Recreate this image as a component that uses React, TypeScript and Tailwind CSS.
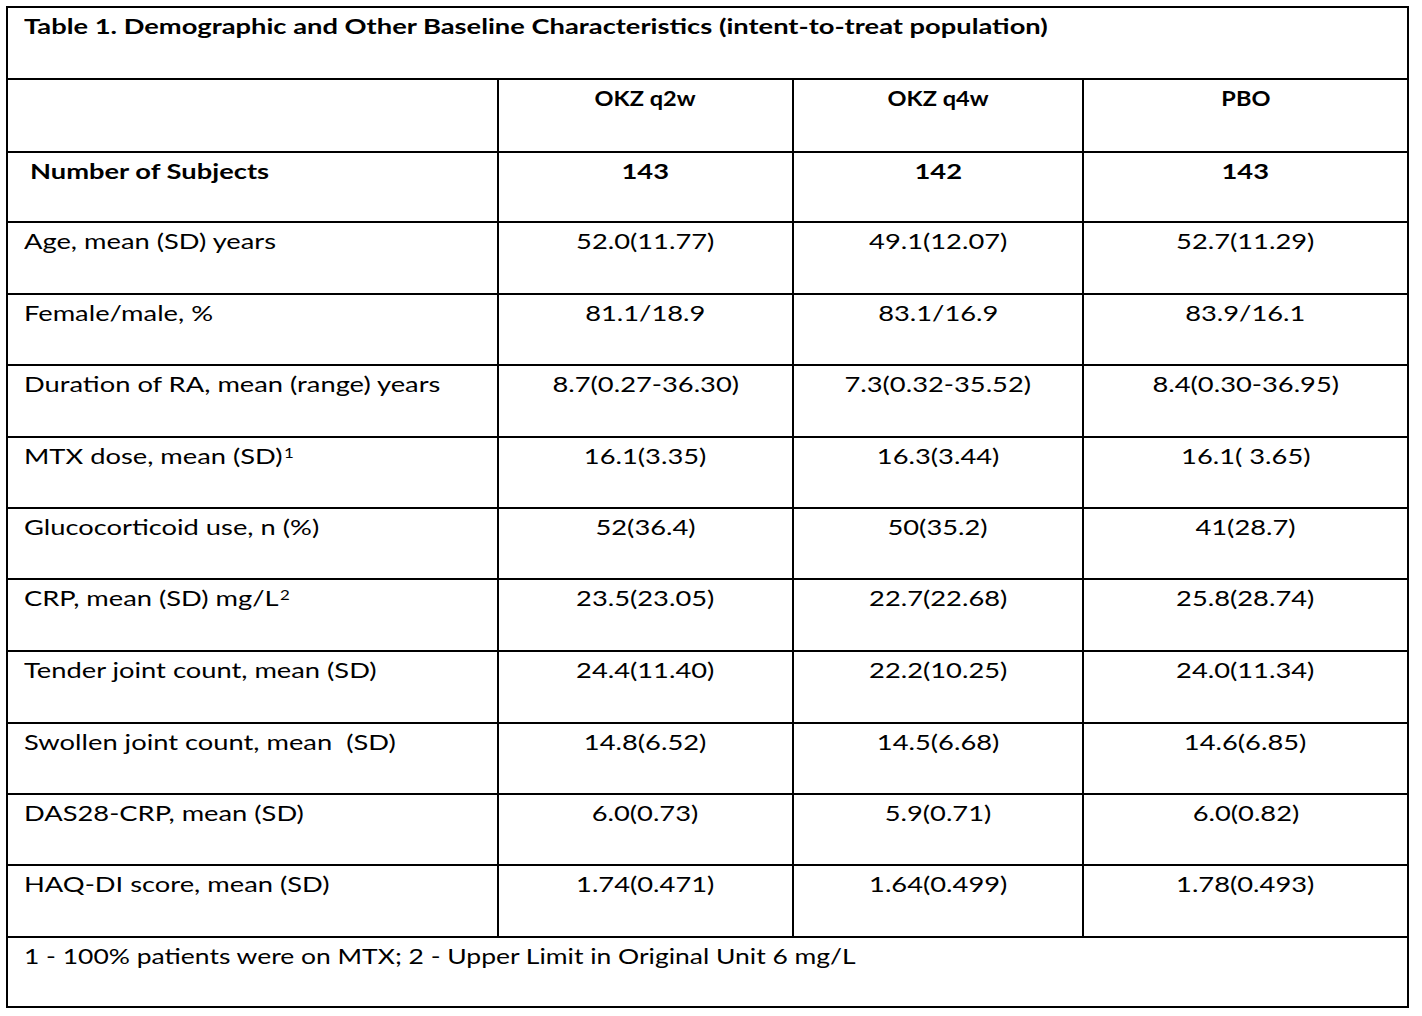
const rows: { label: React.ReactNode; values: string[]; h: string }[] = [
  { label: 'Age, mean (SD) years', values: ['52.0(11.77)', '49.1(12.07)', '52.7(11.29)'], h: 'h-[72px]' },
  { label: 'Female/male, %', values: ['81.1/18.9', '83.1/16.9', '83.9/16.1'], h: 'h-[71px]' },
  { label: 'Duration of RA, mean (range) years', values: ['8.7(0.27-36.30)', '7.3(0.32-35.52)', '8.4(0.30-36.95)'], h: 'h-[72px]' },
  {
    label: (
      <>
        MTX dose, mean (SD)<sup className="text-[13px] ml-[1px]">1</sup>
      </>
    ),
    values: ['16.1(3.35)', '16.3(3.44)', '16.1( 3.65)'],
    h: 'h-[71px]',
  },
  { label: 'Glucocorticoid use, n (%)', values: ['52(36.4)', '50(35.2)', '41(28.7)'], h: 'h-[71px]' },
  {
    label: (
      <>
        CRP, mean (SD) mg/L<sup className="text-[13px] ml-[1px]">2</sup>
      </>
    ),
    values: ['23.5(23.05)', '22.7(22.68)', '25.8(28.74)'],
    h: 'h-[72px]',
  },
  { label: 'Tender joint count, mean (SD)', values: ['24.4(11.40)', '22.2(10.25)', '24.0(11.34)'], h: 'h-[72px]' },
  { label: 'Swollen joint count, mean  (SD)', values: ['14.8(6.52)', '14.5(6.68)', '14.6(6.85)'], h: 'h-[71px]' },
  { label: 'DAS28-CRP, mean (SD)', values: ['6.0(0.73)', '5.9(0.71)', '6.0(0.82)'], h: 'h-[71px]' },
  { label: 'HAQ-DI score, mean (SD)', values: ['1.74(0.471)', '1.64(0.499)', '1.78(0.493)'], h: 'h-[72px]' },
]

const cell = 'border-2 border-black align-top px-[16px] pt-[5px] whitespace-pre'
const wideLeft = 'inline-block origin-left scale-x-[1.3]'
const wideMid = 'inline-block scale-x-[1.3]'

export default function App() {
  return (
    <div className="min-h-screen bg-white pt-[6px] pl-[6px] text-black font-['Lato','Liberation_Sans',sans-serif] text-[21px] leading-[26px]">
      <table className="border-collapse table-fixed w-[1401px]">
        <colgroup>
          <col className="w-[491px]" />
          <col className="w-[295px]" />
          <col className="w-[290px]" />
          <col className="w-[325px]" />
        </colgroup>
        <tbody>
          <tr>
            <td colSpan={4} className={`${cell} h-[72px] font-bold`}>
              <span className={wideLeft}>
                Table 1. Demographic and Other Baseline Characteristics (intent-to-treat population)
              </span>
            </td>
          </tr>
          <tr>
            <td className={`${cell} h-[73px]`}></td>
            {['OKZ q2w', 'OKZ q4w', 'PBO'].map((t) => (
              <td key={t} className={`${cell} h-[73px] text-center font-bold`}>
                <span className="inline-block scale-x-[1.12]">{t}</span>
              </td>
            ))}
          </tr>
          <tr>
            <td className={`${cell} h-[70px] font-bold pl-[22px]`}>
              <span className={wideLeft}>Number of Subjects</span>
            </td>
            {['143', '142', '143'].map((t, i) => (
              <td key={i} className={`${cell} h-[70px] text-center font-bold`}>
                <span className={wideMid}>{t}</span>
              </td>
            ))}
          </tr>
          {rows.map((r, i) => (
            <tr key={i}>
              <td className={`${cell} ${r.h}`}>
                <span className={wideLeft}>{r.label}</span>
              </td>
              {r.values.map((v, j) => (
                <td key={j} className={`${cell} ${r.h} text-center`}>
                  <span className={wideMid}>{v}</span>
                </td>
              ))}
            </tr>
          ))}
          <tr>
            <td colSpan={4} className={`${cell} h-[70px]`}>
              <span className="inline-block origin-left scale-x-[1.26]">
                1 - 100% patients were on MTX; 2 - Upper Limit in Original Unit 6 mg/L
              </span>
            </td>
          </tr>
        </tbody>
      </table>
    </div>
  )
}
